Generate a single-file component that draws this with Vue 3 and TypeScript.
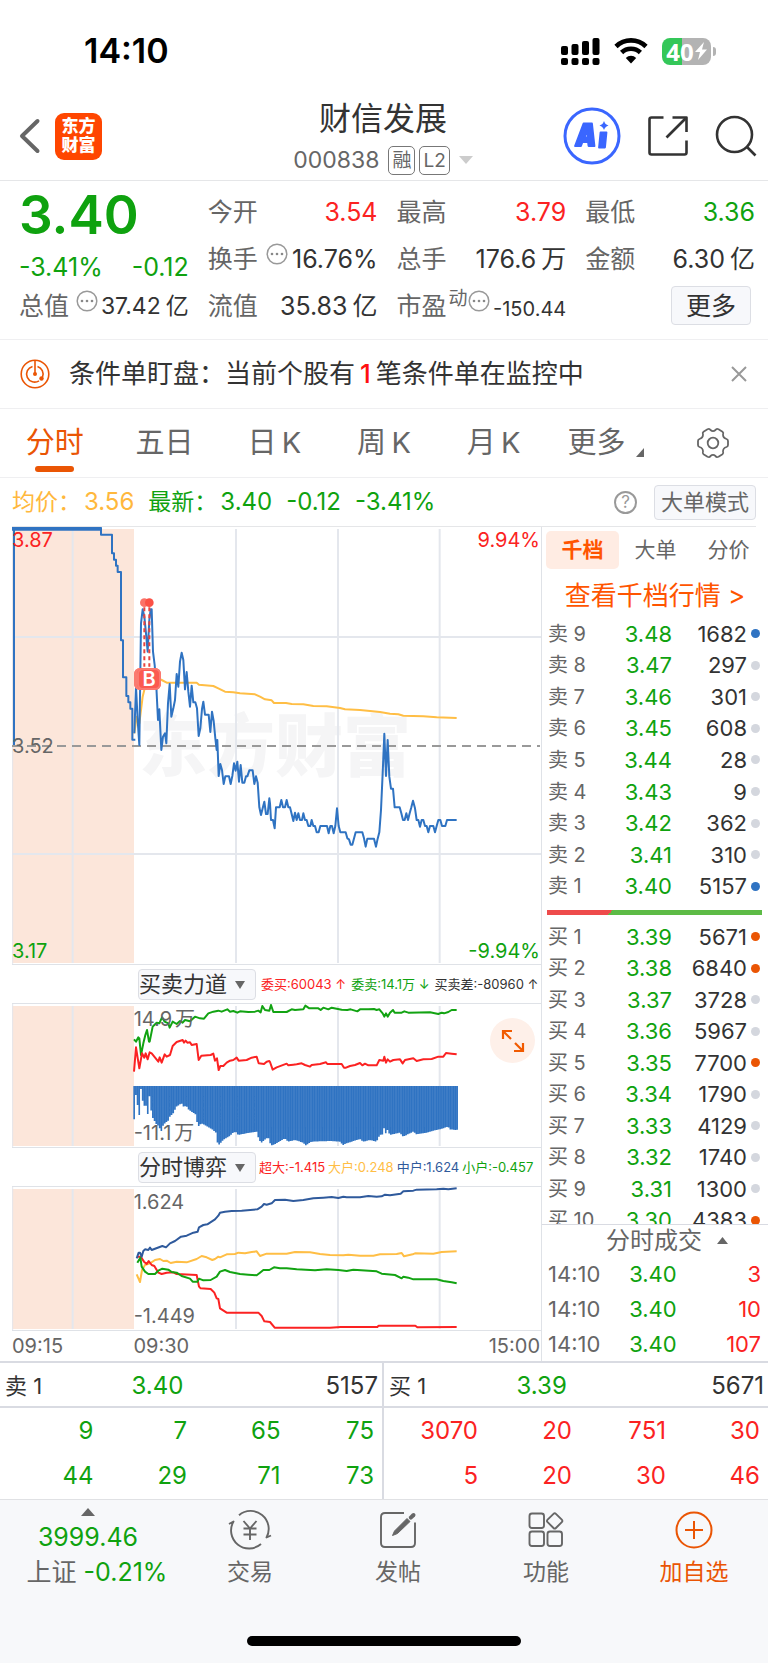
<script setup lang="ts">
import { ref } from 'vue'

type Point = [number, number]
type Tone = 'up' | 'down' | 'dark'
interface Level { side: string; no: number; price: string; qty: number; dot: string }

const LATE_X = 810

const parse = (s: string): Point[] =>
  s.trim().split(/\s+/).map((p) => p.split(',').map(Number) as Point)

const series = (early: string, late: string): Point[] => [
  ...parse(early).filter((p) => p[0] < LATE_X),
  ...parse(late).map(([x, y]) => [x + LATE_X, y] as Point),
]

const line = (pts: Point[]): string => pts.map((p) => p.join(',')).join(' ')

const price = line(series(
  `403,640 408,500 413,600 418,675 423,310 428,268 433,290 438,340 443,395 448,300 452,268 455,268 459,395 464,435 469,500 474,600 478,568 484,690 489,650 495,640 499,670 504,550 509,492 514,590 520,565 525,540 530,462 535,500 540,425 545,398 550,420 555,508 560,456 565,515 570,560 575,497 580,547 586,547 591,565 596,648 601,625 606,567 610,545 615,584 626,584 631,636 636,575 641,603 646,655 650,690 652,660 656,768 661,732 666,750 671,792 676,769 687,769 692,792 697,768 702,730 707,752 712,725 717,785 722,735 727,788 733,788 738,769 742,769 748,751 758,751 763,792 768,769 773,788 778,862 783,885 788,865 793,845 798,882 803,882 808,835`,
  `0,850 3,900 9,900 14,925 18,862 29,862 34,840 39,862 45,862 50,840 55,862 60,862 65,882 70,903 75,878 80,900 85,880 90,900 96,900 100,880 105,900 110,900 115,918 121,918 125,900 130,918 135,918 140,937 146,937 151,918 171,918 176,940 181,918 186,918 191,940 196,918 201,865 206,918 211,937 227,937 232,955 237,958 242,974 247,974 257,937 277,937 282,955 287,980 292,956 312,956 318,980 323,956 328,937 333,870 338,760 343,641 348,768 353,660 358,770 363,806 369,806 374,862 389,862 394,880 399,900 404,900 409,880 414,900 419,880 424,862 429,842 435,865 440,900 445,900 450,920 455,900 460,900 465,918 470,918 475,937 480,918 490,918 495,937 500,918 505,900 511,900 516,918 526,918 531,900 560,900`,
))

const average = line(series(
  `403,640 410,590 418,610 428,530 440,480 470,470 485,480 500,488 590,488 597,494 640,498 655,505 675,515 700,517 720,520 765,523 780,530 795,538`,
  `5,541 12,549 48,549 65,552 100,553 130,558 170,559 210,564 225,568 270,570 330,576 360,581 385,583 400,587 460,589 500,592 560,594`,
))

const auction = 'M42,675 V25 H303 V44 H336 V100 H342 V119 H348 V137 H353 V156 H363 V361 H369 V472 H379 V528 H385 V547 H391 V566 H397 V659 H406'

const askForce = line(series(
  `402,238 408,245 415,232 418,235 423,285 430,250 436,225 441,210 447,245 449,245 458,200 463,195 470,188 478,190 486,172 494,185 505,190 509,203 518,185 530,192 540,183 548,188 555,180 570,184 585,170 600,175 612,176 625,160 640,155 655,152 665,155 682,148 690,155 700,153 712,158 720,154 745,156 765,155 775,152 782,157 787,138 795,150 808,152`,
  `3,135 10,156 50,156 65,148 75,150 100,148 106,137 118,145 145,145 152,150 160,143 175,148 185,143 215,149 232,150 242,148 262,154 270,148 295,148 312,147 320,150 328,148 338,160 343,170 348,160 353,170 360,158 369,150 374,158 395,158 403,154 415,158 480,157 505,162 515,158 522,160 535,156 545,150 560,150`,
))

const bidForce = line(series(
  `402,335 408,262 418,325 426,280 433,293 437,280 443,298 449,277 455,280 475,305 479,292 485,308 494,283 500,290 510,285 518,258 530,246 548,240 552,248 557,242 562,248 570,247 575,255 590,252 596,300 604,287 632,285 640,281 645,302 651,295 656,330 661,318 670,318 680,308 690,302 700,300 710,293 716,302 740,300 755,293 770,290 776,310 792,312 800,305 808,303`,
  `0,306 8,329 20,322 50,311 55,316 70,314 80,313 95,310 105,315 120,320 125,315 150,312 168,307 172,312 215,312 222,323 228,323 240,318 255,315 270,309 277,316 285,311 295,316 320,316 328,300 340,302 343,290 348,308 353,298 360,305 370,300 390,298 398,310 405,300 430,295 440,303 460,298 485,297 505,290 520,290 528,279 545,281 560,283`,
))

const gap = series(
  `400,478 406,478 407,405 411,405 412,435 416,435 417,465 421,465 422,385 426,390 427,420 431,425 432,437 441,437 442,462 446,462 447,408 451,410 452,450 457,453 458,473 461,475 467,490 475,497 486,515 489,498 495,490 505,482 510,470 520,460 530,440 545,430 550,440 560,438 565,448 575,455 590,465 593,502 605,490 615,495 640,510 648,518 652,545 656,556 670,540 690,528 700,518 708,515 715,525 740,520 770,515 778,540 785,548 800,535 808,535`,
  `2,555 8,556 20,550 45,535 55,545 75,540 100,548 108,556 125,545 180,543 210,545 220,555 230,550 270,537 280,545 300,540 320,545 330,525 340,523 342,503 348,520 352,508 360,525 390,518 400,530 420,520 430,515 440,523 470,518 490,512 510,508 535,500 540,508 560,510 566,508`,
)

const valueAt = (pts: Point[], x: number): number => {
  const i = Math.max(1, pts.findIndex((p) => p[0] >= x))
  const [x0, y0] = pts[i - 1]
  const [x1, y1] = pts[i]
  return y0 + ((y1 - y0) * (x - x0)) / (x1 - x0)
}

const MINUTE = 5.1
const gapBars = Array.from({ length: 191 }, (_, m) => {
  const x = 400 + m * MINUTE
  return `M${x.toFixed(1)},378 V${valueAt(gap, x + 3).toFixed(1)} h4.9 V378 Z`
}).join(' ')

const flows = [
  { color: '#ffbe45', pts: series(
    `410,943 420,966 426,930 435,915 450,910 465,900 480,897 490,903 500,902 512,909 530,905 560,907 590,897 605,888 620,892 637,900 645,897 655,890 660,892 680,883 705,882 715,878 735,880 755,876 770,874 780,888 800,881`,
    `0,881 50,881 75,876 120,877 150,882 180,885 220,886 235,884 270,887 310,887 330,883 380,882 395,879 402,889 428,883 435,880 490,881 515,876 560,874`) },
  { color: '#fb2222', pts: series(
    `412,890 422,890 432,905 440,912 446,903 455,915 463,918 475,938 485,942 500,938 520,937 530,942 590,945 597,980 602,985 632,987 643,998 650,1015 655,1017 660,1045 680,1058 775,1058 785,1068 793,1084`,
    `0,1086 14,1103 180,1103 212,1101 322,1101 326,1097 436,1097 442,1102 560,1101`) },
  { color: '#12a312', pts: series(
    `412,908 421,893 425,920 435,935 445,942 465,942 475,932 487,926 505,929 515,936 530,938 545,948 570,956 578,965 592,965 597,956 610,961 632,960 650,950 660,935 675,930 690,936 720,942 745,944 770,946 780,938 790,930 808,930`,
    `12,922 30,925 50,925 80,928 135,931 170,928 205,930 230,933 250,929 320,934 335,941 375,945 395,955 400,950 415,953 430,958 500,958 520,963 545,967 560,970`) },
  { color: '#2f5a9c', pts: series(
    `410,895 416,878 420,878 425,890 430,873 435,868 445,870 450,863 455,870 487,858 498,862 510,850 525,843 543,830 560,827 580,818 593,815 597,802 610,795 622,793 645,778 655,767 660,758 675,755 695,753 725,752 772,748 785,740 792,732 800,734`,
    `5,730 15,720 45,719 70,723 100,720 130,715 160,713 185,711 205,714 220,710 230,712 270,712 295,708 320,710 335,709 345,704 360,706 392,701 400,694 430,692 440,689 500,688 520,686 535,688 560,685`) },
]

const gridX = [218, 708, 1014, 1319]

const periods = ['分时', '五日', '日\u2009K', '周\u2009K', '月\u2009K', '更多']
const period = ref('分时')
const bookTabs = ['千档', '大单', '分价']
const bookTab = ref('千档')
const alertShown = ref(true)
const indicatorA = ref('买卖力道')
const indicatorB = ref('分时博弈')

const levels = (side: string, rows: [number, string, number, string][]): Level[] =>
  rows.map(([no, p, qty, dot]) => ({ side, no, price: p, qty, dot }))

const asks = levels('卖', [
  [9, '3.48', 1682, 'blue'], [8, '3.47', 297, ''], [7, '3.46', 301, ''],
  [6, '3.45', 608, ''], [5, '3.44', 28, ''], [4, '3.43', 9, ''],
  [3, '3.42', 362, ''], [2, '3.41', 310, ''], [1, '3.40', 5157, 'blue'],
])
const bids = levels('买', [
  [1, '3.39', 5671, 'orange'], [2, '3.38', 6840, 'orange'], [3, '3.37', 3728, ''],
  [4, '3.36', 5967, ''], [5, '3.35', 7700, 'orange'], [6, '3.34', 1790, ''],
  [7, '3.33', 4129, ''], [8, '3.32', 1740, ''], [9, '3.31', 1300, ''],
  [10, '3.30', 4383, 'orange'],
])
const trades = [['14:10', '3.40', '3'], ['14:10', '3.40', '10'], ['14:10', '3.40', '107']]

const queues: { label: string; price: string; qty: number; tone: Tone; rows: number[][] }[] = [
  { label: '卖', price: '3.40', qty: 5157, tone: 'down', rows: [[9, 7, 65, 75], [44, 29, 71, 73]] },
  { label: '买', price: '3.39', qty: 5671, tone: 'up', rows: [[3070, 20, 751, 30], [5, 20, 30, 46]] },
]
</script>

<template>
  <div class="app">
    <div class="status">
      <span class="clock">14:10</span>
      <div class="status-icons">
        <svg width="39" height="27" viewBox="0 0 39 27">
          <g fill="#000">
            <rect x="0" y="8" width="7" height="9" rx="2" /><rect x="10.500" y="6" width="7" height="11" rx="2" />
            <rect x="21" y="3" width="7" height="14" rx="2" /><rect x="31.500" y="0" width="7" height="17" rx="2" />
            <rect x="0" y="20" width="7" height="7" rx="2" /><rect x="10.500" y="20" width="7" height="7" rx="2" />
            <rect x="21" y="20" width="7" height="7" rx="2" /><rect x="31.500" y="20" width="7" height="7" rx="2" />
          </g>
        </svg>
        <svg width="34" height="26" viewBox="0 0 34 26">
          <path d="M2 8.500A21.500 21.500 0 0 1 32 8.500" fill="none" stroke="#000" stroke-width="4.600" />
          <path d="M7.600 14.500A13.500 13.500 0 0 1 26.400 14.500" fill="none" stroke="#000" stroke-width="4.600" />
          <path d="M17 25.500L11.800 20A7.400 7.400 0 0 1 22.200 20Z" />
        </svg>
        <div class="battery">
          <span>40</span>
          <svg width="12" height="18" viewBox="0 0 12 18"><path d="M9 0L0 10H5L3 18L12 7.500H7Z" fill="#fff" /></svg>
        </div>
      </div>
    </div>

    <header class="head">
      <div class="head-left">
        <button class="icon-btn" aria-label="返回">
          <svg width="22" height="36" viewBox="0 0 22 36"><path d="M18.500 3L3 18L18.500 33" fill="none" stroke="#666" stroke-width="4" stroke-linecap="round" stroke-linejoin="round" /></svg>
        </button>
        <a href="#" class="logo"><span>东方</span><span>财富</span></a>
      </div>
      <div class="title">
        <h1>财信发展</h1>
        <button class="code">
          <span>000838</span>
          <span class="tags"><i>融</i><i>L2</i></span>
          <svg width="14" height="8" viewBox="0 0 14 8"><path d="M0 0H14L7 8Z" fill="#ccc" /></svg>
        </button>
      </div>
      <div class="head-right">
        <button class="icon-btn" aria-label="Ai">
          <svg width="58" height="58" viewBox="0 0 58 58">
            <circle cx="29" cy="29" r="27" fill="none" stroke="#3a66ff" stroke-width="3" />
            <path fill="#3a66ff" fill-rule="evenodd" stroke="#3a66ff" stroke-width="1.800" stroke-linejoin="round" d="M12 39L20.500 16.500H29L31.500 39H25.500L25 35H19.500L18 39ZM21.500 30.500H24.700L24.200 24Z" />
            <path fill="#3a66ff" stroke="#3a66ff" stroke-width="1.800" stroke-linejoin="round" d="M37.500 25.500H43.500L42 40.500H36Z" />
            <path fill="#3a66ff" d="M41 14Q42 17.500 45.500 18.500Q42 19.500 41 23Q40 19.500 36.500 18.500Q40 17.500 41 14Z" />
          </svg>
        </button>
        <button class="icon-btn" aria-label="分享">
          <svg width="40" height="40" viewBox="0 0 40 40" fill="none" stroke="#333" stroke-width="2.600" stroke-linejoin="round">
            <path d="M15.500 1.500H3.500Q1.500 1.500 1.500 3.500V36.500Q1.500 38.500 3.500 38.500H36.500Q38.500 38.500 38.500 36.500V24.500" />
            <path d="M24.500 1.500H38.500V16" /><path d="M37.500 2.500L18.500 21.500" />
          </svg>
        </button>
        <button class="icon-btn" aria-label="搜索">
          <svg width="42" height="42" viewBox="0 0 42 42" fill="none" stroke="#333" stroke-width="2.600">
            <circle cx="19.500" cy="19.500" r="17.500" /><path d="M31.500 31.500L40.500 40.500" />
          </svg>
        </button>
      </div>
    </header>

    <section class="quote">
      <div class="qcol main">
        <div class="last">3.40</div>
        <div class="cell chg down"><span>-3.41%</span><span>-0.12</span></div>
        <div class="cell cap">
          <span class="lab">总值</span>
          <svg class="more-dot" width="22" height="22" viewBox="0 0 22 22"><use href="#ellipsis" /></svg>
          <span class="val small">37.42<b>亿</b></span>
        </div>
      </div>
      <div class="qcol">
        <div class="cell"><span class="lab">今开</span><span class="val up">3.54</span></div>
        <div class="cell">
          <span class="lab">换手</span>
          <svg class="more-dot" width="22" height="22" viewBox="0 0 22 22"><use href="#ellipsis" /></svg>
          <span class="val">16.76%</span>
        </div>
        <div class="cell"><span class="lab">流值</span><span class="val">35.83<b>亿</b></span></div>
      </div>
      <div class="qcol">
        <div class="cell"><span class="lab">最高</span><span class="val up">3.79</span></div>
        <div class="cell"><span class="lab">总手</span><span class="val">176.6<b>万</b></span></div>
        <div class="cell">
          <span class="lab">市盈<sup>动</sup></span>
          <svg class="more-dot tight" width="22" height="22" viewBox="0 0 22 22">
            <g id="ellipsis"><circle cx="11" cy="11" r="9.800" fill="none" stroke="#999" stroke-width="1.500" /><g fill="#888"><circle cx="6" cy="11" r="1.300" /><circle cx="11" cy="11" r="1.300" /><circle cx="16" cy="11" r="1.300" /></g></g>
          </svg>
          <span class="val tiny">-150.44</span>
        </div>
      </div>
      <div class="qcol">
        <div class="cell"><span class="lab">最低</span><span class="val down">3.36</span></div>
        <div class="cell"><span class="lab">金额</span><span class="val">6.30<b>亿</b></span></div>
        <div class="cell end"><button class="soft more">更多</button></div>
      </div>
    </section>

    <section v-if="alertShown" class="alert">
      <svg width="30" height="30" viewBox="0 0 30 30" fill="none" stroke="#ea5504" stroke-width="1.600">
        <circle cx="15" cy="15" r="13.800" />
        <path d="M12.500 7.400A8 8 0 1 0 19 21.800" /><path d="M15 1V15" />
        <path d="M17.500 7.400A8 8 0 0 1 22.500 18" /><circle cx="15" cy="15" r="2" fill="#ea5504" stroke="none" /><circle cx="21.500" cy="19.500" r="2.200" fill="#ea5504" stroke="none" />
      </svg>
      <p>条件单盯盘：当前个股有<em>1</em>笔条件单在监控中</p>
      <button class="icon-btn" aria-label="关闭" @click="alertShown = false">
        <svg width="16" height="16" viewBox="0 0 16 16"><path d="M1 1L15 15M15 1L1 15" stroke="#999" stroke-width="2" /></svg>
      </button>
    </section>

    <nav class="periods">
      <button v-for="p in periods" :key="p" :class="{ on: p === period, menu: p === '更多' }" @click="period = p">
        {{ p }}<svg v-if="p === '更多'" class="corner" width="8" height="9" viewBox="0 0 8 9"><path d="M8 0V9H0Z" fill="#666" /></svg>
      </button>
      <button aria-label="设置">
        <svg width="34" height="32" viewBox="0 0 34 32" fill="none" stroke="#666" stroke-width="1.800">
          <path stroke-linejoin="round" d="M11.500 2.300Q13.500 1.300 14.500 3Q17 5.200 19.500 3Q20.500 1.300 22.500 2.300L26.500 4.700Q27.800 5.700 27 7.500Q27 11 30.500 12Q32 12.500 32 14V18Q32 19.500 30.500 20Q27 21 27 24.500Q27.800 26.300 26.500 27.300L22.500 29.700Q20.500 30.700 19.500 29Q17 26.800 14.500 29Q13.500 30.700 11.500 29.700L7.500 27.300Q6.200 26.300 7 24.500Q7 21 3.500 20Q2 19.500 2 18V14Q2 12.500 3.500 12Q7 11 7 7.500Q6.200 5.700 7.500 4.700Z" />
          <circle cx="17" cy="16" r="5.300" />
        </svg>
      </button>
    </nav>

    <div class="summary">
      <span class="avg">均价：<b>3.56</b></span>
      <span class="down">最新：<b>3.40</b></span>
      <span class="down num">-0.12</span>
      <span class="down num">-3.41%</span>
      <button class="icon-btn help" aria-label="帮助">?</button>
      <button class="soft mode">大单模式</button>
    </div>

    <main class="board">
      <div class="charts">
        <div class="chart price-chart">
          <div class="watermark">东方财富</div>
          <svg viewBox="36 21 1587 1311" preserveAspectRatio="none">
            <rect x="36" y="27" width="366" height="1302" fill="#fce6da" />
            <g class="grid">
              <path v-for="x in gridX" :key="x" :d="`M${x},27V1329`" />
              <path d="M36,351H1623M36,1002H1623" />
              <path class="edge" d="M38,21V1332" />
            </g>
            <path d="M36,678H1620" class="dash" />
            <polyline :points="average" stroke="#ffbe45" />
            <path :d="auction" stroke="#2f73c2" />
            <path d="M36,26H305" stroke="#2f73c2" class="thick" />
            <polyline :points="price" stroke="#2f73c2" />
            <path d="M433,262V440M448,262V440" stroke="#e8433f" stroke-dasharray="4 3" />
            <circle cx="433" cy="248" r="13" fill="#fb7268" /><circle cx="448" cy="248" r="13" fill="#fb5146" />
          </svg>
          <span class="badge back"></span>
          <span class="badge">B</span>
          <span class="tag tl up">3.87</span>
          <span class="tag tr up">9.94%</span>
          <span class="tag ml">3.52</span>
          <span class="tag bl down">3.17</span>
          <span class="tag br down">-9.94%</span>
        </div>

        <div class="indicator">
          <label class="soft pick"><select v-model="indicatorA" aria-label="指标一"><option>买卖力道</option><option>分时博弈</option></select></label>
          <span class="up">委买:60043 ↑</span><span class="down">委卖:14.1万 ↓</span><span>买卖差:-80960 ↑</span>
        </div>
        <div class="chart sub-chart">
          <svg viewBox="36 132 1587 429" preserveAspectRatio="none">
            <rect x="36" y="138" width="366" height="420" fill="#fce6da" />
            <g class="grid">
              <path v-for="x in gridX" :key="x" :d="`M${x},138V558`" />
              <path class="edge" d="M38,132V561" />
            </g>
            <path :d="gapBars" class="bars" />
            <polyline :points="askForce" stroke="#12a312" />
            <polyline :points="bidForce" stroke="#fb2222" />
          </svg>
          <span class="tag sub-top">14.9<b>万</b></span>
          <span class="tag sub-bottom">-11.1<b>万</b></span>
          <button class="expand" aria-label="展开">
            <svg width="24" height="24" viewBox="0 0 24 24" fill="none" stroke="#f15a00" stroke-width="2.200">
              <path d="M2 10V2H11M2 2L10 10M22 14V22H13M22 22L14 14" />
            </svg>
          </button>
        </div>

        <div class="indicator flows">
          <label class="soft pick"><select v-model="indicatorB" aria-label="指标二"><option>分时博弈</option><option>买卖力道</option></select></label>
          <span class="up">超大:-1.415</span><span class="gold">大户:0.248</span><span class="navy">中户:1.624</span><span class="down">小户:-0.457</span>
        </div>
        <div class="chart sub-chart">
          <svg viewBox="36 681 1587 429" preserveAspectRatio="none">
            <rect x="36" y="687" width="366" height="420" fill="#fce6da" />
            <g class="grid">
              <path v-for="x in gridX" :key="x" :d="`M${x},687V1107`" />
              <path class="edge" d="M38,681V1110" />
            </g>
            <polyline v-for="f in flows" :key="f.color" :points="line(f.pts)" :stroke="f.color" />
          </svg>
          <span class="tag sub-top">1.624</span>
          <span class="tag sub-bottom">-1.449</span>
        </div>
        <div class="axis"><span>09:15</span><span>09:30</span><span>15:00</span></div>
      </div>

      <aside class="book">
        <div class="book-tabs">
          <button v-for="t in bookTabs" :key="t" :class="{ on: t === bookTab }" @click="bookTab = t">{{ t }}</button>
        </div>
        <a href="#" class="deep">查看千档行情 &gt;</a>
        <table class="levels">
          <tbody>
            <tr v-for="l in asks" :key="l.no">
              <th scope="row">{{ l.side }} {{ l.no }}</th><td class="p">{{ l.price }}</td><td class="q">{{ l.qty }}</td><td class="d"><i :class="l.dot"></i></td>
            </tr>
          </tbody>
        </table>
        <div class="ratio"></div>
        <div class="clip">
          <table class="levels ten">
            <tbody>
              <tr v-for="l in bids" :key="l.no">
                <th scope="row">{{ l.side }} {{ l.no }}</th><td class="p">{{ l.price }}</td><td class="q">{{ l.qty }}</td><td class="d"><i :class="l.dot"></i></td>
              </tr>
            </tbody>
          </table>
        </div>
        <button class="deals">分时成交<svg width="11" height="7" viewBox="0 0 11 7"><path d="M0 7H11L5.500 0Z" fill="#666" /></svg></button>
        <table class="trades">
          <tbody>
            <tr v-for="(t, i) in trades" :key="i"><td>{{ t[0] }}</td><td class="p">{{ t[1] }}</td><td class="up">{{ t[2] }}</td></tr>
          </tbody>
        </table>
      </aside>
    </main>

    <section class="queues">
      <div v-for="q in queues" :key="q.label" class="queue">
        <div class="queue-head"><span>{{ q.label }} 1</span><span class="down">{{ q.price }}</span><span>{{ q.qty }}</span></div>
        <table :class="q.tone">
          <tbody>
            <tr v-for="(r, i) in q.rows" :key="i"><td v-for="(n, j) in r" :key="j">{{ n }}</td></tr>
          </tbody>
        </table>
      </div>
    </section>

    <footer class="dock">
      <div class="dock-row">
        <button class="index">
          <svg width="14" height="8" viewBox="0 0 14 8"><path d="M0 8H14L7 0Z" fill="#666" /></svg>
          <span class="points down">3999.46</span>
          <span class="name">上证 <b class="down">-0.21%</b></span>
        </button>
        <button>
          <svg width="44" height="44" viewBox="0 0 44 44" fill="none" stroke="#666" stroke-width="1.900" stroke-linejoin="round">
            <path d="M11 7.200A18 18 0 0 1 38.500 29.500L43 27.500" /><path d="M33 36A18 18 0 0 1 5.500 13.500L1 16" />
            <path d="M15.500 13L22 20.500L28.500 13M22 20.500V32M15.500 20.500H28.500M15.500 26.500H28.500" />
          </svg>
          <span>交易</span>
        </button>
        <button>
          <svg width="44" height="44" viewBox="0 0 44 44" fill="none" stroke="#666" stroke-width="1.900">
            <path d="M28 5H9Q5 5 5 9V35Q5 39 9 39H35Q39 39 39 35V14.500" />
            <path d="M16.500 27.500L18.500 23L31 10.500L34 13.500L21.500 25.500Z" fill="#666" stroke-width="1" /><path d="M34.800 9.700L37.500 7" stroke-width="4" stroke-linecap="round" />
          </svg>
          <span>发帖</span>
        </button>
        <button>
          <svg width="44" height="44" viewBox="0 0 44 44" fill="none" stroke="#666" stroke-width="1.900" stroke-linejoin="round">
            <rect x="5.500" y="5.500" width="14.500" height="14.500" rx="2.500" /><rect x="5.500" y="23.500" width="14.500" height="14.500" rx="2.500" /><rect x="23.500" y="23.500" width="14.500" height="14.500" rx="2.500" />
            <path d="M29.500 5.800Q30.700 4.600 31.900 5.800L37.800 11.700Q39 12.900 37.800 14.100L31.900 20Q30.700 21.200 29.500 20L23.600 14.100Q22.400 12.900 23.600 11.700Z" />
          </svg>
          <span>功能</span>
        </button>
        <button class="accent">
          <svg width="44" height="44" viewBox="0 0 44 44" fill="none" stroke="#ea5504" stroke-width="2">
            <circle cx="22" cy="22" r="17.500" /><path d="M13 22H31M22 13V31" />
          </svg>
          <span>加自选</span>
        </button>
      </div>
      <div class="home"></div>
    </footer>
  </div>
</template>

<style>
body { margin: 0; background: #fff; }
</style>

<style scoped>
.app { font-family: Inter, "Noto Sans CJK SC", sans-serif; color: #333; background: #fff; min-height: 100vh; display: flex; flex-direction: column; font-size: 21px; line-height: 30px; }
.app *, .app *::before, .app *::after { box-sizing: border-box; }
button, select { font: inherit; color: inherit; background: none; border: 0; padding: 0; margin: 0; cursor: pointer; }
svg { display: block; flex: none; }
a { text-decoration: none; }
table { border-collapse: collapse; width: 100%; table-layout: fixed; }
td, th { padding: 0; font-weight: 400; text-align: right; }
b, i, em { font-weight: 400; font-style: normal; }
.up { color: #fb2222; }
.down { color: #0fa20f; }
.gold { color: #ffbe45; }
.navy { color: #2f5a9c; }
.soft { background: #f7f8fb; border: 1px solid #dcdee4; border-radius: 4px; }
.icon-btn { display: flex; align-items: center; justify-content: center; }

.status { height: 92px; padding: 10px 52px 0 84px; display: flex; align-items: center; justify-content: space-between; }
.clock { font-size: 34px; font-weight: 600; color: #000; }
.status-icons { display: flex; align-items: center; gap: 14px; }
.battery { position: relative; width: 49px; height: 27px; margin-right: 5px; border-radius: 8px; background: linear-gradient(90deg, #34c759 40%, #b3b3b3 40%); color: #fff; display: flex; align-items: center; justify-content: center; gap: 1px; font-family: "Noto Sans", sans-serif; font-size: 24px; font-weight: 700; line-height: 27px; }
.battery::after { content: ""; position: absolute; right: -5px; top: 9px; width: 3px; height: 9px; border-radius: 0 4px 4px 0; background: #b3b3b3; }

.head { height: 89px; border-bottom: 1px solid #e5e6e8; padding: 0 11px; display: grid; grid-template-columns: 1fr auto 1fr; align-items: center; }
.head-left { display: flex; align-items: center; gap: 14px; padding-left: 8px; }
.logo { width: 47px; height: 47px; border-radius: 9px; background: #ff4600; color: #fff; font-weight: 900; font-size: 17px; line-height: 19px; display: flex; flex-direction: column; align-items: center; justify-content: center; }
.title { padding: 6px 2px 0 0; text-align: center; }
h1 { margin: 0; font-size: 32px; line-height: 42px; font-weight: 400; }
.code { display: flex; align-items: center; justify-content: center; gap: 9px; height: 40px; font-size: 23px; color: #666; }
.tags { display: flex; gap: 4px; }
.tags i { border: 1px solid #777; border-radius: 5px; height: 29px; min-width: 26px; padding: 0 3px; font-size: 19px; line-height: 27px; }
.head-right { display: flex; align-items: center; justify-content: flex-end; gap: 27px; }

.quote { display: grid; grid-template-columns: repeat(4, minmax(0, 1fr)); gap: 19px; padding: 7px 13px 10px 19px; border-bottom: 1px solid #efeff1; font-size: 25px; }
.cell { height: 47px; display: flex; align-items: center; justify-content: space-between; white-space: nowrap; }
.cell.end { justify-content: flex-end; }
.last { height: 55px; line-height: 54px; font-size: 53px; font-weight: 600; color: #0fa20f; }
.chg { font-size: 25px; }
.cap { height: 32px; }
.lab { color: #666; }
.val b { margin-left: 5px; }
.val.small { font-size: 23px; }
.val.tiny { font-size: 20px; padding-top: 6px; }
.more-dot { margin: 0 -4px 10px 0; }
.more-dot.tight { margin-right: -8px; }
sup { font-size: 19px; line-height: 18px; vertical-align: 10px; margin: 0 -11px 0 2px; }
.more { width: 80px; height: 39px; margin-right: 4px; }

.alert { height: 69px; border-bottom: 1px solid #efeff1; padding: 0 21px 0 20px; display: flex; align-items: center; }
.alert p { margin: 0 auto 0 19px; font-size: 26px; }
.alert em { color: #ff1010; font-weight: 500; margin: 0 5px; }

.periods { height: 69px; border-bottom: 1px solid #efeff1; display: grid; grid-template-columns: repeat(7, 1fr); font-size: 29px; color: #666; }
.periods button { position: relative; display: flex; align-items: center; justify-content: center; white-space: pre; }
.periods .menu { padding-right: 14px; }
.periods .on { color: #ea5504; }
.periods .on::after { content: ""; position: absolute; bottom: 5px; width: 39px; height: 6px; border-radius: 3px; background: #ea5504; }
.corner { position: absolute; right: 14px; bottom: 20px; }

.summary { height: 49px; margin: 0 12px; border-bottom: 1px solid #e5e6e8; display: flex; align-items: center; font-size: 23px; }
.summary span { margin-right: 14px; }
.summary b { font-size: 24px; margin-left: 3px; }
.summary .num { font-size: 24px; }
.summary .avg { color: #ffb83d; }
.help { width: 23px; height: 23px; border: 2px solid #999; border-radius: 50%; color: #999; font-size: 17px; line-height: 19px; margin: 0 17px 0 auto; }
.mode { height: 35px; padding: 0 6px; font-size: 22px; color: #666; }

.board { display: grid; grid-template-columns: minmax(0, 1fr) 227px; }
.charts { padding-left: 12px; }
.chart { position: relative; border-bottom: 1px solid #dfe2e7; }
.chart > svg { position: relative; width: 100%; height: 100%; }
.chart > svg :is(path, polyline) { fill: none; stroke-width: 2; vector-effect: non-scaling-stroke; stroke-linejoin: round; }
.chart > svg .bars { fill: #2f73c2; stroke: none; }
.chart > svg .thick { stroke-width: 4; }
.grid { stroke: #e4e7ed; }
.chart > svg .grid .edge { stroke-width: 1; }
.chart > svg .dash { stroke: #999; stroke-dasharray: 9 6; }
.price-chart { height: 438px; }
.sub-chart { height: 144px; }
.watermark { position: absolute; left: 24%; top: 184px; font-size: 68px; line-height: 70px; font-weight: 900; color: #f5f5f6; white-space: nowrap; }
.tag { position: absolute; font-size: 20px; line-height: 24px; color: #666; }
.tag b { margin-left: 3px; }
.tag.up { color: #fb2222; }
.tag.down { color: #0fa20f; }
.tl, .tr { top: 1px; }
.ml { top: 207px; }
.bl, .br { bottom: 1px; }
.tr, .br { right: 1px; }
.sub-top { left: 23%; top: 3px; }
.sub-bottom { left: 23%; bottom: 2px; }
.badge { position: absolute; left: 125px; top: 141px; width: 24px; height: 22px; border-radius: 6px; background: #fb5a50; color: #fff; font-size: 20px; line-height: 22px; font-weight: 600; text-align: center; box-shadow: inset 0 0 0 2px #fb7a70; }
.badge.back { left: 122px; background: #fb7a70; }
.expand { position: absolute; right: 6px; top: 14px; width: 45px; height: 45px; border-radius: 50%; background: #fef0e9; display: flex; align-items: center; justify-content: center; }

.indicator { height: 39px; padding-left: 126px; border-bottom: 1px solid #dfe2e7; display: flex; align-items: center; gap: 5px; font-size: 13px; white-space: nowrap; }
.flows { gap: 3px; }
.pick { position: relative; flex: none; width: 118px; height: 31px; }
.pick select { appearance: none; width: 100%; height: 29px; font-size: 22px; line-height: 29px; }
.pick::after { content: ""; position: absolute; right: 10px; top: 11px; border: 5px solid transparent; border-top: 8px solid #666; border-bottom: 0; pointer-events: none; }
.axis { height: 30px; display: grid; grid-template-columns: 23% 1fr auto; font-size: 20px; line-height: 31px; color: #666; padding-right: 1px; }

.book { border-left: 1px solid #dfe2e7; font-size: 22px; }
.book-tabs { height: 46px; padding: 4px 3px 4px 4px; display: grid; grid-template-columns: repeat(3, 1fr); font-size: 21px; color: #666; }
.book-tabs .on { color: #ff5500; font-weight: 700; background: #ffece3; border-radius: 5px; }
.deep { display: block; height: 45px; line-height: 45px; font-size: 26px; color: #ff5500; text-align: center; white-space: nowrap; }
.levels { height: 284px; }
.levels.ten { height: 315px; }
.levels th { width: 62px; padding-left: 6px; text-align: left; color: #666; font-size: 20px; white-space: nowrap; }
.levels td { line-height: 30px; }
.p { color: #0fa20f; }
.levels .p { width: 68px; }
.levels .d { width: 21px; }
.levels .d i { display: block; margin-left: 4px; width: 9px; height: 9px; border-radius: 50%; background: #d4d7de; }
.levels .d .blue { background: #2f73c2; }
.levels .d .orange { background: #ea5504; }
.ratio { height: 5px; margin: 8px 6px 6px 5px; background: linear-gradient(135deg, #ee4b4b 30%, #5dbb46 30%); }
.clip { height: 304px; overflow: hidden; border-bottom: 1px solid #d9dbe2; }
.deals { display: flex; align-items: center; justify-content: center; gap: 15px; width: 100%; height: 31px; padding-left: 24px; font-size: 24px; color: #666; }
.trades { height: 105px; }
.trades td:first-child { padding-left: 6px; text-align: left; color: #666; }
.trades .p { padding-right: 16px; }
.trades .up { padding-right: 7px; }

.queues { border-top: 2px solid #d9dbe2; border-bottom: 1px solid #e0e1e4; display: grid; grid-template-columns: 1fr 1fr; font-size: 24px; }
.queue:first-child { border-right: 2px solid #d9dbe2; }
.queue-head { height: 45px; padding: 2px 4px 0 5px; border-bottom: 2px solid #d9dbe2; display: grid; grid-template-columns: 1fr auto 1fr; align-items: center; font-size: 22px; }
.queue-head .down { font-size: 24px; margin-left: -60px; }
.queue-head span:last-child { text-align: right; font-size: 24px; }
.queue table { height: 91px; width: calc(100% - 8px); }

.dock { flex: 1; background: #f7f8fa; display: flex; flex-direction: column; justify-content: space-between; align-items: center; padding: 8px 0 17px; }
.dock-row { width: 100%; display: grid; grid-template-columns: 176px repeat(4, 1fr); font-size: 23px; color: #666; }
.dock-row button { display: flex; flex-direction: column; align-items: center; gap: 5px; }
.dock-row .index { gap: 0; }
.points { font-size: 25px; line-height: 43px; }
.name { line-height: 27px; font-size: 25px; padding-left: 18px; }
.dock-row .accent { color: #ea5504; }
.home { width: 274px; height: 10px; border-radius: 5px; background: #000; }
</style>
